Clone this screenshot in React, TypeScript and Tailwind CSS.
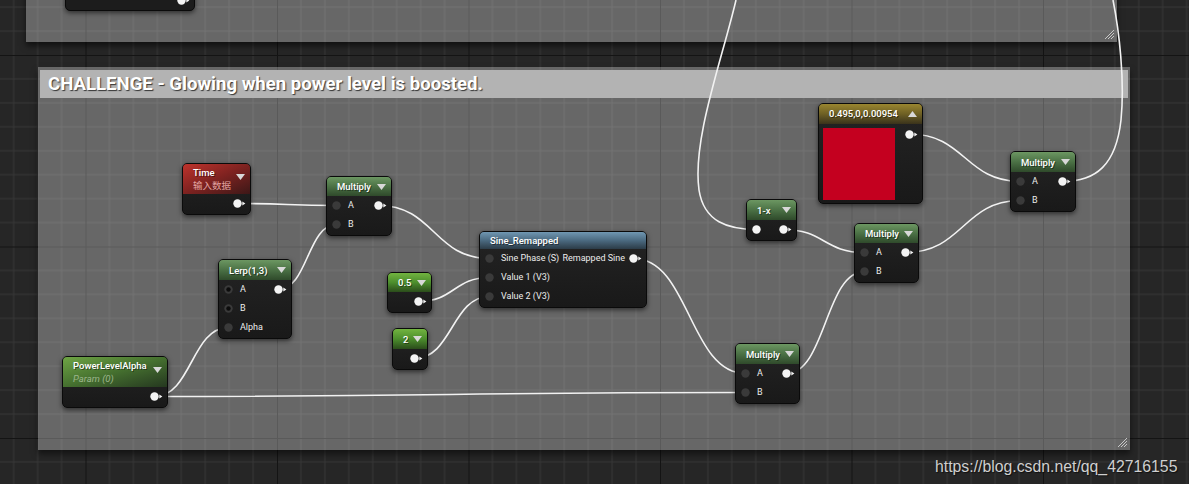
import React from 'react';

type Row = {
  label?: string;
  pin?: 'in' | 'open' | 'lit' | 'none';
  out?: boolean;
  outLabel?: string;
};

const wires: [number, number, number, number][] = [
  [237.5, 203.5, 336.5, 205.5],
  [278.5, 289.5, 336.5, 224.5],
  [378.5, 205.5, 489.5, 258.5],
  [418.5, 301.5, 489.5, 277.5],
  [414.5, 358.5, 489.5, 296.5],
  [154.5, 396.5, 228.5, 327.5],
  [154.5, 396.5, 745.5, 392.5],
  [633.5, 258.5, 745.5, 373.5],
  [786.5, 373.5, 864.5, 271.5],
  [783.5, 229.5, 864.5, 252.5],
  [909.5, 134, 1020.5, 181.5],
  [905.5, 252.5, 1020.5, 200.5],
];

function bezier([x1, y1, x2, y2]: [number, number, number, number]) {
  const d = Math.max(Math.abs(x2 - x1) * 0.5, 25);
  return `M ${x1} ${y1} C ${x1 + d} ${y1}, ${x2 - d} ${y2}, ${x2} ${y2}`;
}

function OutPin() {
  return (
    <svg width="13" height="9" viewBox="0 0 13 9" className="shrink-0">
      <circle cx="4.5" cy="4.5" r="4.2" fill="#f4f4f4" />
      <path d="M9.3 2.6 L12.4 4.5 L9.3 6.4 Z" fill="#f4f4f4" />
    </svg>
  );
}

function InPin({ kind }: { kind: 'in' | 'open' | 'lit' }) {
  return (
    <svg width="9" height="9" viewBox="0 0 9 9" className="shrink-0">
      <circle cx="4.5" cy="4.5" r="4.2" fill={kind === 'lit' ? '#f4f4f4' : '#3a3a3a'} />
      {kind === 'open' && <circle cx="4.5" cy="4.5" r="2.2" fill="#0c0c0c" />}
    </svg>
  );
}

function Arrow({ up }: { up?: boolean }) {
  return (
    <svg width="9" height="6" viewBox="0 0 9 6" className="shrink-0">
      <path d={up ? 'M0 6 H9 L4.5 0 Z' : 'M0 0 H9 L4.5 6 Z'} fill="#d8d8d8" />
    </svg>
  );
}

function Node({
  pos,
  head,
  title,
  sub,
  subCls,
  rows,
  arrow = 'down',
  tall,
}: {
  pos: string;
  head: string;
  title: string;
  sub?: string;
  subCls?: string;
  rows: Row[];
  arrow?: 'down' | 'up' | 'none';
  tall?: boolean;
}) {
  return (
    <div
      className={`absolute ${pos} overflow-hidden rounded-[5px] border border-[#0a0a0a] bg-gradient-to-b from-[#242424] to-[#191919] font-['Roboto',sans-serif] shadow-[0_2px_5px_rgba(0,0,0,0.55)]`}
    >
      <div
        className={`${head} flex justify-between pr-[5px] pl-[10px] ${
          tall ? 'items-start pt-[2px]' : 'items-center'
        }`}
      >
        <div className="flex flex-col">
          <span className="text-[9.5px] leading-[13px] font-medium whitespace-nowrap text-white [text-shadow:1px_1px_0_rgba(0,0,0,0.45)]">
            {title}
          </span>
          {sub && (
            <span className={`text-[9.5px] leading-[13px] whitespace-nowrap ${subCls}`}>{sub}</span>
          )}
        </div>
        {arrow !== 'none' && (
          <div className={tall ? 'pt-[8px]' : ''}>
            <Arrow up={arrow === 'up'} />
          </div>
        )}
      </div>
      <div className="pb-[1px]">
        {rows.map((r, i) => (
          <div key={i} className="flex h-[19px] items-center justify-between pr-[4px] pl-[5px]">
            <div className="flex items-center gap-[7px]">
              {r.pin && r.pin !== 'none' && <InPin kind={r.pin} />}
              {r.label && (
                <span className="text-[9px] leading-none whitespace-nowrap text-[#ececec]">
                  {r.label}
                </span>
              )}
            </div>
            <div className="flex items-center gap-[4px]">
              {r.outLabel && (
                <span className="text-[9px] leading-none whitespace-nowrap text-[#ececec]">
                  {r.outLabel}
                </span>
              )}
              {r.out && <OutPin />}
            </div>
          </div>
        ))}
      </div>
    </div>
  );
}

function Resize() {
  return (
    <svg width="12" height="12" viewBox="0 0 12 12">
      <path d="M11 2 L2 11 M11 5 L5 11 M11 8 L8 11" stroke="#c8c8c8" strokeWidth="1" />
    </svg>
  );
}

const green = 'bg-gradient-to-b from-[#6c9762] via-[#4b7145] to-[#2f4a2b]';
const lime = 'bg-gradient-to-b from-[#72b440] via-[#4c8e2d] to-[#2b4d1b]';

export default function App() {
  const s = 191.5 / 8;
  return (
    <div className="relative h-[484px] w-[1189px] overflow-hidden bg-[#262626]">
      <svg className="absolute inset-0" width="1189" height="484">
        <defs>
          <pattern id="grid" patternUnits="userSpaceOnUse" x="85.5" y="55" width="191.5" height="191.5">
            {Array.from({ length: 7 }).map((_, i) => (
              <path
                key={i}
                d={`M ${(i + 1) * s} 0 V 191.5 M 0 ${(i + 1) * s} H 191.5`}
                stroke="#373737"
                strokeWidth="1"
              />
            ))}
            <path d="M 0 0 V 191.5 M 0 0 H 191.5" stroke="#141414" strokeWidth="2" />
          </pattern>
        </defs>
        <rect width="1189" height="484" fill="url(#grid)" />
      </svg>

      {/* comment boxes */}
      <div className="absolute top-[-10px] left-[26px] flex h-[52px] w-[1091px] items-end justify-end bg-white/30 shadow-[0_4px_6px_rgba(0,0,0,0.55)]">
        <div className="pr-[2px] pb-[2px]">
          <Resize />
        </div>
      </div>
      <div className="absolute top-[67px] left-[38px] flex h-[383px] w-[1092px] flex-col justify-between bg-white/30 shadow-[0_4px_6px_rgba(0,0,0,0.5)]">
        <div className="mx-[2px] mt-[3px] flex h-[28px] items-center bg-[#b3b3b3] pt-[2px] pl-[8px]">
          <span className="font-['Roboto',sans-serif] text-[18.6px] font-bold text-white [text-shadow:1px_1px_1px_rgba(40,40,40,0.9)]">
            CHALLENGE - Glowing when power level is boosted.
          </span>
        </div>
        <div className="flex justify-end pr-[2px] pb-[2px]">
          <Resize />
        </div>
      </div>

      {/* wires */}
      <svg className="absolute inset-0" width="1189" height="484" fill="none">
        {wires.map((w, i) => (
          <path key={i} d={bezier(w)} stroke="#f2f2f2" strokeWidth="1.6" />
        ))}
        <path d="M 736 0 C 722 60 692 140 699 190 C 704 222 728 229.5 757 229.5" stroke="#f2f2f2" strokeWidth="1.6" />
        <path d="M 1062.5 181.5 C 1096 181.5 1116 165 1121 120 C 1125 80 1119 30 1113 0" stroke="#f2f2f2" strokeWidth="1.6" />
        <path d="M 182 1 C 188 1 192 -1 198 -5" stroke="#f2f2f2" strokeWidth="1.6" />
      </svg>

      {/* nodes */}
      <div className="absolute top-[-20px] left-[65px] flex h-[31px] w-[130px] items-end justify-end rounded-[5px] border border-[#0a0a0a] bg-[#1c1c1c] pr-[4px] pb-[5px] shadow-[0_2px_5px_rgba(0,0,0,0.55)]">
        <OutPin />
      </div>

      <Node
        pos="left-[182px] top-[163px] w-[69px]"
        head="h-[30px] bg-gradient-to-br from-[#c0332c] via-[#7e2220] to-[#3d1717]"
        title="Time"
        sub="输入数据"
        subCls="text-[#e2a2a0] font-['Noto_Sans_CJK_SC',sans-serif]"
        tall
        rows={[{ out: true }]}
      />
      <Node
        pos="left-[326px] top-[176px] w-[66px]"
        head={`h-[19px] ${green}`}
        title="Multiply"
        rows={[
          { label: 'A', pin: 'in', out: true },
          { label: 'B', pin: 'in' },
        ]}
      />
      <Node
        pos="left-[218px] top-[259px] w-[74px]"
        head={`h-[20px] ${green}`}
        title="Lerp(1,3)"
        rows={[
          { label: 'A', pin: 'open', out: true },
          { label: 'B', pin: 'open' },
          { label: 'Alpha', pin: 'in' },
        ]}
      />
      <Node
        pos="left-[479px] top-[231px] w-[168px]"
        head="h-[17px] bg-gradient-to-b from-[#7097b2] via-[#4b6a80] to-[#2c3c48]"
        title="Sine_Remapped"
        arrow="none"
        rows={[
          { label: 'Sine Phase (S)', pin: 'in', out: true, outLabel: 'Remapped Sine' },
          { label: 'Value 1 (V3)', pin: 'in' },
          { label: 'Value 2 (V3)', pin: 'in' },
        ]}
      />
      <Node
        pos="left-[387px] top-[272px] w-[45px]"
        head={`h-[19px] ${lime}`}
        title="0.5"
        rows={[{ out: true }]}
      />
      <Node
        pos="left-[392px] top-[328px] w-[36px]"
        head={`h-[20px] ${lime}`}
        title="2"
        rows={[{ out: true }]}
      />
      <Node
        pos="left-[62px] top-[356px] w-[106px]"
        head="h-[30px] bg-gradient-to-br from-[#6fa545] via-[#45702f] to-[#25381f]"
        title="PowerLevelAlpha"
        sub="Param (0)"
        subCls="italic text-[#9db68c]"
        tall
        rows={[{ out: true }]}
      />
      <Node
        pos="left-[746px] top-[199px] w-[51px]"
        head={`h-[20px] ${green}`}
        title="1-x"
        rows={[{ pin: 'lit', out: true }]}
      />
      <Node
        pos="left-[854px] top-[223px] w-[65px]"
        head={`h-[19px] ${green}`}
        title="Multiply"
        rows={[
          { label: 'A', pin: 'in', out: true },
          { label: 'B', pin: 'in' },
        ]}
      />
      <Node
        pos="left-[735px] top-[343px] w-[65px]"
        head={`h-[20px] ${green}`}
        title="Multiply"
        rows={[
          { label: 'A', pin: 'in', out: true },
          { label: 'B', pin: 'in' },
        ]}
      />
      <Node
        pos="left-[1010px] top-[151px] w-[66px]"
        head={`h-[20px] ${green}`}
        title="Multiply"
        rows={[
          { label: 'A', pin: 'in', out: true },
          { label: 'B', pin: 'in' },
        ]}
      />

      {/* constant colour node */}
      <div className="absolute top-[103px] left-[818px] w-[105px] overflow-hidden rounded-[5px] border border-[#0a0a0a] bg-gradient-to-b from-[#242424] to-[#191919] font-['Roboto',sans-serif] shadow-[0_2px_5px_rgba(0,0,0,0.55)]">
        <div className="flex h-[20px] items-center justify-between bg-gradient-to-b from-[#9a8630] via-[#6e6024] to-[#3a331b] pr-[5px] pl-[10px]">
          <span className="text-[9.5px] font-medium whitespace-nowrap text-white [text-shadow:1px_1px_0_rgba(0,0,0,0.45)]">
            0.495,0,0.00954
          </span>
          <Arrow up />
        </div>
        <div className="flex justify-between pr-[4px] pb-[3px] pl-[4px]">
          <div className="mt-[4px] h-[72px] w-[72px] bg-[#c4001f]" />
          <div className="pt-[5.5px]">
            <OutPin />
          </div>
        </div>
      </div>

      <div className="absolute top-[455px] left-[935px] font-['Liberation_Sans',Arial,sans-serif] text-[15.8px] text-[#cfcfcf] [text-shadow:1px_1px_1px_rgba(0,0,0,0.6)]">
        https://blog.csdn.net/qq_42716155
      </div>
    </div>
  );
}
